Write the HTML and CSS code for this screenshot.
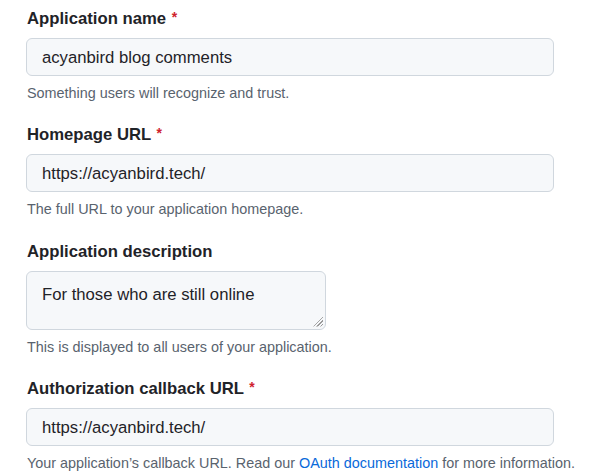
FILE: index.html
```html
<!DOCTYPE html>
<html lang="en">
<head>
<meta charset="utf-8">
<title>Register OAuth application</title>
<link rel="stylesheet" href="styles.css">
</head>
<body>
<form class="form">
  <div class="group">
    <div class="label">Application name <span class="req">*</span></div>
    <div class="field">acyanbird blog comments</div>
    <p class="note">Something users will recognize and trust.</p>
  </div>
  <div class="group">
    <div class="label">Homepage URL <span class="req">*</span></div>
    <div class="field">https://acyanbird.tech/</div>
    <p class="note">The full URL to your application homepage.</p>
  </div>
  <div class="group">
    <div class="label">Application description</div>
    <div class="field area">For those who are still online<span class="grip"></span></div>
    <p class="note">This is displayed to all users of your application.</p>
  </div>
  <div class="group">
    <div class="label">Authorization callback URL <span class="req">*</span></div>
    <div class="field">https://acyanbird.tech/</div>
    <p class="note">Your application’s callback URL. Read our <a class="link" href="#">OAuth documentation</a> for more information.</p>
  </div>
</form>
</body>
</html>
```
FILE: styles.css
```css
html, body {
  margin: 0;
  background: #ffffff;
}
body {
  font-family: "Liberation Sans", Arial, Helvetica, sans-serif;
  color: #1f2328;
  padding: 6px 0 0 26px;
}
.form {
  display: flex;
  flex-direction: column;
  gap: 19.3px;
}
.label {
  font-weight: bold;
  font-size: 16.7px;
  line-height: 26px;
  height: 24px;
  padding-left: 1px;
  margin-bottom: 8px;
}
.req {
  color: #cf222e;
  font-size: 14px;
  line-height: 0;
  vertical-align: 2px;
  margin-left: 1px;
}
.field {
  box-sizing: border-box;
  width: 528px;
  height: 38px;
  border: 1px solid #d0d7de;
  border-radius: 6px;
  background: #f6f8fa;
  font-size: 16.7px;
  line-height: 38px;
  padding: 0 15px;
  color: #1f2328;
  overflow: hidden;
}
.field.area {
  position: relative;
  width: 300px;
  height: 59px;
  line-height: 22px;
  padding-top: 12px;
}
.grip {
  position: absolute;
  right: 2px;
  bottom: 2px;
  width: 10px;
  height: 10px;
  background: repeating-linear-gradient(135deg, transparent 0 1.5px, #9a9a9a 1.5px 2.5px);
  clip-path: polygon(100% 0, 100% 100%, 0 100%);
}
.note {
  margin: 7px 0 0 1px;
  font-size: 14.4px;
  line-height: 20px;
  color: #59636e;
}
.link {
  color: #0969da;
  text-decoration: none;
}
```
